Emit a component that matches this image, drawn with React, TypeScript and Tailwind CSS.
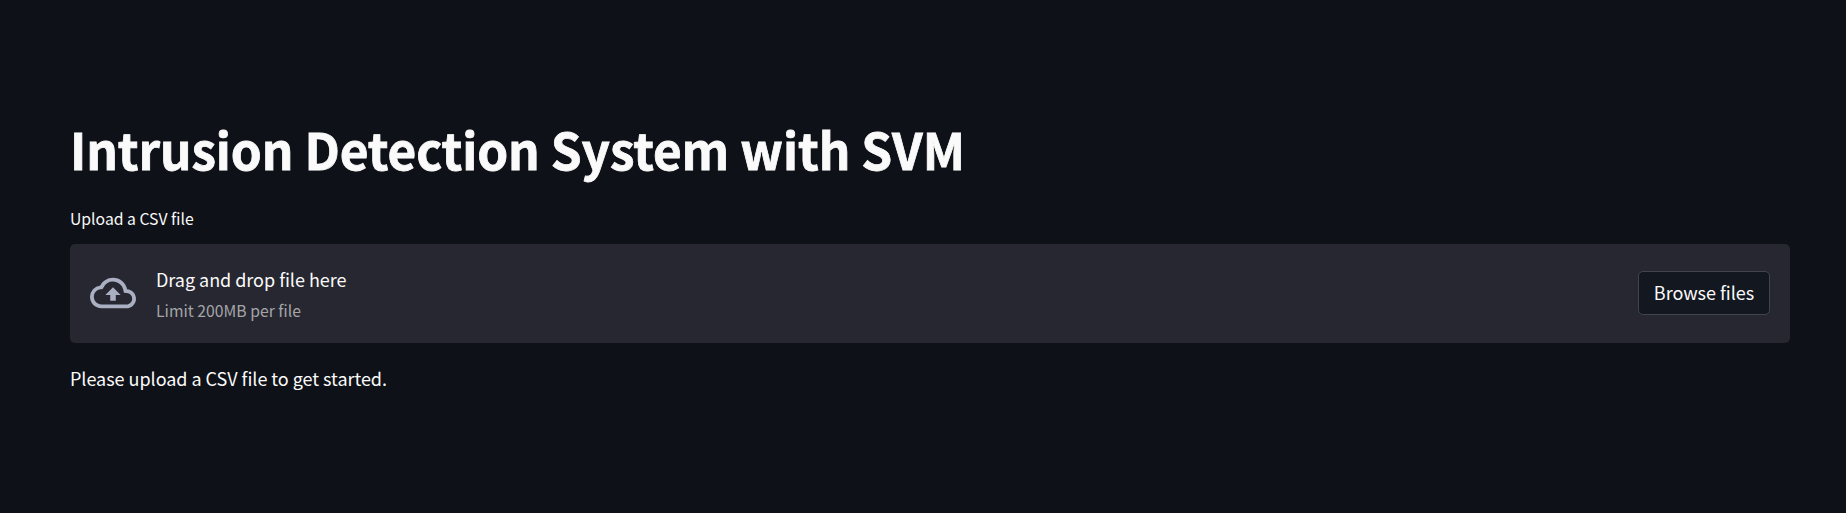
function CloudUploadIcon() {
  return (
    <svg viewBox="0 0 24 24" fill="currentColor" aria-hidden="true" className="size-[46px] shrink-0 text-[#aaafc2]">
      <path d="M19.35 10.04A7.49 7.49 0 0012 4C9.11 4 6.6 5.64 5.35 8.04A5.994 5.994 0 000 14c0 3.31 2.69 6 6 6h13c2.76 0 5-2.24 5-5 0-2.64-2.05-4.78-4.65-4.96zM19 18H6c-2.21 0-4-1.79-4-4 0-2.05 1.53-3.76 3.56-3.97l1.07-.11.5-.95A5.469 5.469 0 0112 6c2.62 0 4.88 1.86 5.39 4.43l.3 1.5 1.53.11A2.98 2.98 0 0122 15c0 1.65-1.35 3-3 3zM8 13h2.55v3h2.9v-3H16l-4-4-4 4z" />
    </svg>
  );
}

function FileUploader() {
  return (
    <section>
      <label className="block text-[15.75px] leading-[26px] text-[#fafafa]">Upload a CSV file</label>
      <div className="mt-3 flex h-[99px] items-center rounded-[5px] bg-[#262730] px-5 pb-px">
        <CloudUploadIcon />
        <div className="ml-5 flex flex-col gap-1 pt-0.5">
          <span className="text-[18px] leading-[30px] tracking-[-0.03px] text-[#fafafa]">Drag and drop file here</span>
          <span className="text-[15.75px] leading-[26px] text-[#a5a5a9]">Limit 200MB per file</span>
        </div>
        <button
          type="button"
          className="ml-auto flex h-11 w-[132px] items-center justify-center rounded-[5px] border border-[#41444c] bg-[#131720] pb-0.5 text-[18px] leading-[30px] tracking-[-0.03px] whitespace-nowrap text-[#fafafa]"
        >
          Browse files
        </button>
      </div>
    </section>
  );
}

export default function App() {
  return (
    <main className="min-h-screen bg-[#0e1117] pt-[116px] pr-14 pl-[70px] font-['Noto_Sans_CJK_SC',sans-serif] text-[#fafafa]">
      <h1 className="mb-6 text-[49.5px] leading-[66px] font-bold tracking-[-0.0022em] [-webkit-text-stroke:0.8px_#fafafa]">
        Intrusion Detection System with SVM
      </h1>
      <FileUploader />
      <p className="mt-[19px] text-[18px] leading-8 tracking-[-0.03px]">Please upload a CSV file to get started.</p>
    </main>
  );
}
